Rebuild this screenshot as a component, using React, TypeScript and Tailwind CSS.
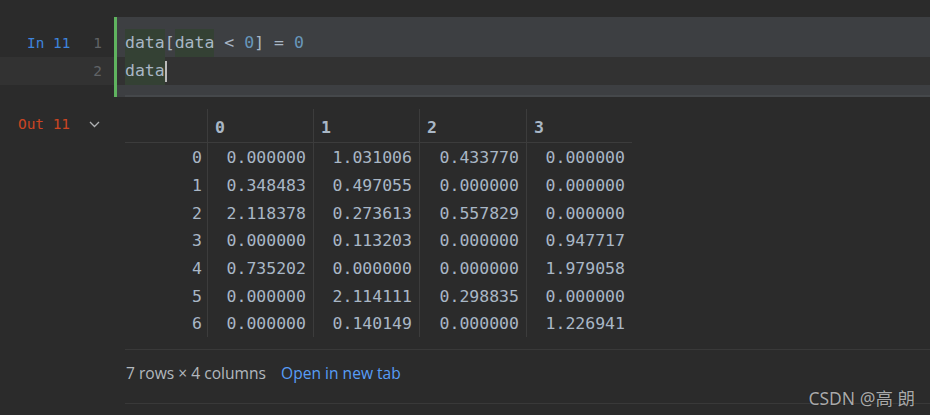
import React from "react";

const rows: string[][] = [
  ["0.000000", "1.031006", "0.433770", "0.000000"],
  ["0.348483", "0.497055", "0.000000", "0.000000"],
  ["2.118378", "0.273613", "0.557829", "0.000000"],
  ["0.000000", "0.113203", "0.000000", "0.947717"],
  ["0.735202", "0.000000", "0.000000", "1.979058"],
  ["0.000000", "2.114111", "0.298835", "0.000000"],
  ["0.000000", "0.140149", "0.000000", "1.226941"],
];

export default function App() {
  return (
    <div className="relative w-[930px] h-[415px] overflow-hidden bg-[#2b2b2b] font-['DejaVu_Sans_Mono',monospace] text-[#a9b7c6]">
      {/* Input cell */}
      <div className="pt-[17px] flex flex-col">
        <div className="flex h-[12px]">
          <div className="w-[114px]" />
          <div className="flex-1 border-l-[3px] border-[#5fb35f] bg-[#3d3f42]" />
        </div>
        <div className="flex h-[28px]">
          <div className="w-[114px] flex items-center justify-between pl-[27px] pr-[12px] pt-[1px] text-[14.4px]">
            <span className="text-[#3e84dc]">In 11</span>
            <span className="text-[#606366]">1</span>
          </div>
          <div className="flex-1 border-l-[3px] border-[#5fb35f] bg-[#3d3f42] pl-[8px] flex items-center text-[16.5px] whitespace-pre">
            <span className="bg-[#344134] h-full flex items-center pt-[1px]">data</span>
            <span className="pt-[1px]">[</span>
            <span className="bg-[#344134] h-full flex items-center pt-[1px]">data</span>
            <span className="pt-[1px]"> &lt; </span>
            <span className="text-[#6897bb] pt-[1px]">0</span>
            <span className="pt-[1px]">] = </span>
            <span className="text-[#6897bb] pt-[1px]">0</span>
          </div>
        </div>
        <div className="flex h-[28px] bg-[#323232]">
          <div className="w-[114px] flex items-center justify-end pr-[12px] pt-[1px] text-[14.4px] text-[#606366]">
            2
          </div>
          <div className="flex-1 border-l-[3px] border-[#5fb35f] pl-[8px] flex items-center text-[16.5px] whitespace-pre">
            <span className="bg-[#344134] h-full flex items-center pt-[1px]">data</span>
            <span className="w-[2px] h-[21px] bg-[#bbbbbb]" />
          </div>
        </div>
        <div className="flex h-[12px]">
          <div className="w-[114px]" />
          <div className="flex-1 border-l-[3px] border-[#5fb35f] bg-[#3d3f42] flex flex-col justify-end">
            <div className="ml-[8px] h-[2px] bg-[#45484b]" />
          </div>
        </div>
      </div>

      {/* Output */}
      <div className="flex">
        <div className="w-[125px] shrink-0 pt-[17px] pl-[18px] flex items-start">
          <span className="text-[14.4px] leading-[20px] text-[#cc4522]">Out 11</span>
          <svg className="ml-[19px] mt-[7px]" width="11" height="7" viewBox="0 0 11 7">
            <path d="M1 1 L5.5 5.5 L10 1" fill="none" stroke="#afb1b3" strokeWidth="1.3" />
          </svg>
        </div>
        <div className="flex-1 flex flex-col pt-[12px]">
          <div className="grid grid-cols-[82px_106px_106px_107px_106px] w-max text-[16.5px]">
            <div className="h-[34px] border-b border-[#3c3c3c]" />
            {["0", "1", "2", "3"].map((h) => (
              <div
                key={h}
                className="h-[34px] border-b border-l border-[#3c3c3c] pl-[7px] pt-[5px] flex items-center font-bold text-[#a9b7c6]"
              >
                {h}
              </div>
            ))}
            {rows.map((r, i) => (
              <React.Fragment key={i}>
                <div className="h-[27.67px] flex items-center justify-end pr-[5px] pt-[4px]">{i}</div>
                {r.map((v, j) => (
                  <div
                    key={j}
                    className="h-[27.67px] flex items-center justify-end pr-[7px] pt-[4px] border-l border-[#3c3c3c]"
                  >
                    {v}
                  </div>
                ))}
              </React.Fragment>
            ))}
          </div>
          <div className="mt-[12px] border-t border-[#393939] h-[54px] flex items-center font-['Open_Sans',sans-serif] text-[15.6px] pb-[4px] pl-[1px]">
            <span className="text-[#b2b8be]">7 rows × 4 columns</span>
            <span className="ml-[15px] text-[#589df6]">Open in new tab</span>
          </div>
          <div className="border-t border-[#393939]" />
        </div>
      </div>

      <div className="absolute right-[15px] top-[386px] font-['Noto_Sans','Noto_Sans_CJK_SC',sans-serif] text-[17.5px] leading-[24px] text-[#a9a9a9] [text-shadow:0_0_1px_#111]">
        CSDN @高 朗
      </div>
    </div>
  );
}
